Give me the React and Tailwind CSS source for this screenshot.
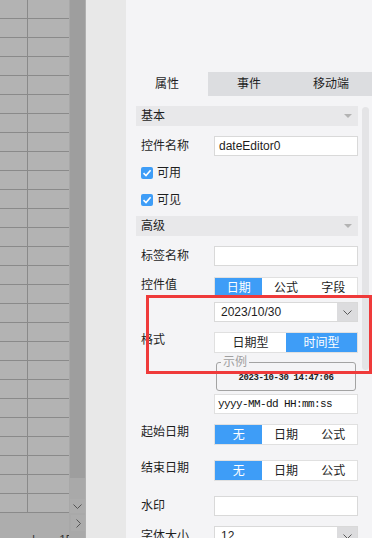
import React from "react";

function Chevron() {
  return (
    <svg width="9" height="5" viewBox="0 0 9 5">
      <polyline points="0.5,0.5 4.5,4.5 8.5,0.5" fill="none" stroke="#5a5a5a" strokeWidth="1" />
    </svg>
  );
}

function SectionHeader({ title, mt }) {
  return (
    <div className={`h-[20px] shrink-0 bg-[#e8e8ea] flex items-center justify-between pl-[5px] pr-[6px] ${mt}`}>
      <span className="text-[12px] leading-[16px] text-[#1e1e1e]">{title}</span>
      <svg width="8" height="4" viewBox="0 0 8 4">
        <polygon points="0,0 8,0 4,4" fill="#b3b3b3" />
      </svg>
    </div>
  );
}

function Segmented({ items, active }) {
  return (
    <div className="flex w-[144px] h-[21px] border border-[#e0e0e0] bg-white">
      {items.map((t, i) => (
        <div
          key={t}
          className={`flex-1 flex items-center justify-center text-[12px] leading-[16px] ${
            i === active ? "bg-[#3e9df7] text-white" : "text-[#1e1e1e]"
          }`}
        >
          {t}
        </div>
      ))}
    </div>
  );
}

function Label({ children, extra = "" }) {
  return (
    <div className={`w-[78px] pl-[5px] text-[12px] leading-[16px] text-[#1e1e1e] ${extra}`}>{children}</div>
  );
}

function Input({ value = "" }) {
  return (
    <div className="w-[144px] h-[20px] bg-white border border-[#d9d9d9] flex items-center pl-[4px] text-[12px] leading-[16px] text-[#1e1e1e]">
      {value}
    </div>
  );
}

function Select({ value }) {
  return (
    <div className="w-[144px] h-[20px] bg-white border border-[#d9d9d9] flex items-center">
      <div className="flex-1 pl-[6px] text-[12px] leading-[16px] text-[#1e1e1e]">{value}</div>
      <div className="w-[20px] h-full bg-[#dcdcde] flex items-center justify-center">
        <Chevron />
      </div>
    </div>
  );
}

function Checkbox({ label, mt }) {
  return (
    <div className={`h-[20px] flex items-center pl-[5px] gap-[4px] ${mt}`}>
      <div className="w-[12px] h-[12px] rounded-[2px] bg-[#3e9df7] flex items-center justify-center">
        <svg width="10" height="10" viewBox="0 0 10 10">
          <polyline points="1.5,5.2 4,7.6 8.6,2.2" fill="none" stroke="white" strokeWidth="1.6" />
        </svg>
      </div>
      <span className="text-[12px] leading-[16px] text-[#1e1e1e]">{label}</span>
    </div>
  );
}

export default function App() {
  return (
    <div className="relative w-[372px] h-[538px] overflow-hidden flex font-['Liberation_Sans','Noto_Sans_CJK_SC',sans-serif]">
      {/* left sheet under overlay */}
      <div className="w-[69px] h-full flex flex-col">
        <div className="flex flex-col shrink-0">
          {Array.from({ length: 27 }).map((_, i) => (
            <div key={i} className="h-[19px] shrink-0 flex border-b border-[#8a8a8a] bg-[#b3b3b3]">
              <div className="w-[28px] border-r border-[#8a8a8a]" />
              <div className="flex-1" />
            </div>
          ))}
        </div>
        <div className="flex-1 bg-[#adadad] overflow-hidden flex items-start pl-[32px] pt-[20px] text-[12px] leading-[14px] text-[#333] whitespace-nowrap">
          <span>|</span>
          <span className="ml-[24px]">150%</span>
        </div>
      </div>
      <div className="w-px h-full bg-[#a8a8a8]" />
      <div className="w-[15px] h-full flex flex-col">
        <div className="h-[478px] shrink-0 bg-[#9e9e9e]" />
        <div className="flex-1 bg-[#a9a9a9] flex flex-col">
          <div className="h-[21px] shrink-0" />
          <div className="h-[14px] shrink-0 bg-[#acacac] flex items-center justify-center">
            <svg width="9" height="5" viewBox="0 0 9 5">
              <polyline points="0.5,0.5 4.5,4.5 8.5,0.5" fill="none" stroke="#555" strokeWidth="1" />
            </svg>
          </div>
          <div className="h-[2px] shrink-0" />
          <div className="h-[16px] shrink-0 ml-px bg-[#acacac] flex items-center justify-center">
            <svg width="5" height="9" viewBox="0 0 5 9">
              <polyline points="0.5,0.5 4.5,4.5 0.5,8.5" fill="none" stroke="#555" strokeWidth="1" />
            </svg>
          </div>
        </div>
      </div>
      <div className="w-px h-full bg-[#b0b0b0]" />
      <div className="w-[40px] h-full bg-[#e8e8e8]" />

      {/* right property panel */}
      <div className="relative w-[246px] h-full bg-[#f4f4f6]">
        <div className="h-[72px]" />
        <div className="h-[24px] flex text-[12px] leading-[16px] text-[#1e1e1e]">
          <div className="w-[82px] flex items-center justify-center bg-[#f4f4f6]">属性</div>
          <div className="w-[82px] flex items-center justify-center bg-[#dcdde0]">事件</div>
          <div className="w-[82px] flex items-center justify-center bg-[#dcdde0]">移动端</div>
        </div>

        <div className="pl-[10px] w-[232px] flex flex-col">
          <SectionHeader title="基本" mt="mt-[10px]" />

          <div className="mt-[10px] flex items-center">
            <Label>控件名称</Label>
            <Input value="dateEditor0" />
          </div>

          <Checkbox label="可用" mt="mt-[7px]" />
          <Checkbox label="可见" mt="mt-[7px]" />

          <SectionHeader title="高级" mt="mt-[6px]" />

          <div className="mt-[10px] flex items-center">
            <Label>标签名称</Label>
            <Input />
          </div>

          <div className="mt-[11px] flex items-start">
            <Label>控件值</Label>
            <Segmented items={["日期", "公式", "字段"]} active={0} />
          </div>

          <div className="mt-[4px] flex items-start">
            <Label extra="mt-[30px]">格式</Label>
            <div className="flex flex-col">
              <Select value="2023/10/30" />
              <div className="mt-[10px]">
                <Segmented items={["日期型", "时间型"]} active={1} />
              </div>
              <fieldset className="mt-[3px] mx-[2px] w-[140px] border border-[#a3a3a3] rounded-[3px] px-[4px]">
                <legend className="px-[2px] text-[12px] leading-[12px] text-[#a0a0a0]">示例</legend>
                <div className="h-[22px] flex items-center justify-center font-['Liberation_Mono',monospace] font-bold text-[9px] tracking-[-0.4px] text-[#222]">
                  2023-10-30 14:47:06
                </div>
              </fieldset>
              <div className="mt-[3px] w-[144px] h-[20px] bg-white border border-[#e0e0e0] flex items-center pl-[3px] font-['Liberation_Mono',monospace] text-[11px] tracking-[-0.6px] text-[#111]">
                yyyy-MM-dd HH:mm:ss
              </div>
            </div>
          </div>

          <div className="mt-[10px] flex items-start">
            <Label>起始日期</Label>
            <Segmented items={["无", "日期", "公式"]} active={0} />
          </div>

          <div className="mt-[15px] flex items-start">
            <Label>结束日期</Label>
            <Segmented items={["无", "日期", "公式"]} active={0} />
          </div>

          <div className="mt-[15px] flex items-center">
            <Label>水印</Label>
            <Input />
          </div>

          <div className="mt-[10px] flex items-center">
            <Label>字体大小</Label>
            <Select value="12" />
          </div>
        </div>

        <div className="absolute left-[236px] top-[107px] w-[7px] h-[263px] rounded-full bg-[#e4e4e6]" />
      </div>

      {/* red highlight box */}
      <div className="absolute left-[146px] top-[295px] w-[226px] h-[79px] border-[3px] border-[#ef3a3a]" />
    </div>
  );
}
